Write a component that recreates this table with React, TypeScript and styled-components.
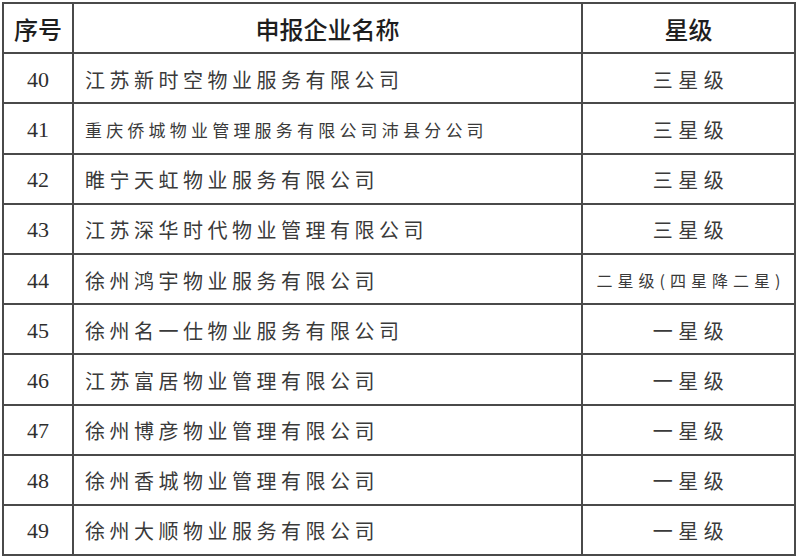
import React from "react";
import styled, {createGlobalStyle} from "styled-components";

const GlobalStyle = createGlobalStyle`
  html, body {
    margin: 0;
    padding: 0;
    background: #ffffff;
  }
`

const Sheet = styled.div`
  display: grid;
  grid-template-columns: 68px 507px 211px;
  grid-auto-rows: 48.2px;
  gap: 2px;
  width: max-content;
  margin: 2px 0 0 2px;
  border: 2px solid #4a4a4a;
  background: #4a4a4a;
`

const Cell = styled.div<{ $align?: "left" | "center" }>`
  display: flex;
  align-items: center;
  justify-content: ${p => p.$align === "left" ? "flex-start" : "center"};
  background: #ffffff;
  overflow: hidden;
  white-space: nowrap;
`

const HeadCell = styled(Cell)`
  font-family: "Noto Sans CJK SC", "Noto Sans", sans-serif;
  font-size: 24px;
  font-weight: 500;
  color: #1e1e1e;
`

const NumCell = styled(Cell)`
  font-family: "Liberation Serif", "Noto Sans CJK SC", serif;
  font-size: 22px;
  color: #2e2e2e;
  padding-top: 3px;
`

const NameCell = styled(Cell)<{ $small?: boolean }>`
  padding-left: 11px;
  padding-top: 2px;
  font-family: "Noto Sans CJK SC", "Noto Sans", sans-serif;
  font-size: ${p => p.$small ? "17px" : "20px"};
  letter-spacing: ${p => p.$small ? "4.2px" : "4.5px"};
  font-weight: 400;
  color: #3a3a3a;
`

const StarCell = styled(Cell)<{ $small?: boolean }>`
  font-family: "Noto Sans CJK SC", "Noto Sans", sans-serif;
  font-size: ${p => p.$small ? "16px" : "20px"};
  letter-spacing: ${p => p.$small ? "5px" : "5.5px"};
  padding-left: 5px;
  padding-top: 2px;
  font-weight: 400;
  color: #3a3a3a;
`

interface Company {
    no: number
    name: string
    level: string
}

const companies: Company[] = [
    {no: 40, name: "江苏新时空物业服务有限公司", level: "三星级"},
    {no: 41, name: "重庆侨城物业管理服务有限公司沛县分公司", level: "三星级"},
    {no: 42, name: "睢宁天虹物业服务有限公司", level: "三星级"},
    {no: 43, name: "江苏深华时代物业管理有限公司", level: "三星级"},
    {no: 44, name: "徐州鸿宇物业服务有限公司", level: "二星级(四星降二星)"},
    {no: 45, name: "徐州名一仕物业服务有限公司", level: "一星级"},
    {no: 46, name: "江苏富居物业管理有限公司", level: "一星级"},
    {no: 47, name: "徐州博彦物业管理有限公司", level: "一星级"},
    {no: 48, name: "徐州香城物业管理有限公司", level: "一星级"},
    {no: 49, name: "徐州大顺物业服务有限公司", level: "一星级"},
]

export default function App() {
    return <>
        <GlobalStyle/>
        <Sheet>
            <HeadCell>序号</HeadCell>
            <HeadCell>申报企业名称</HeadCell>
            <HeadCell>星级</HeadCell>
            {companies.map(c => <React.Fragment key={c.no}>
                <NumCell>{c.no}</NumCell>
                <NameCell $align="left" $small={c.name.length > 16}>{c.name}</NameCell>
                <StarCell $small={c.level.length > 3}>{c.level}</StarCell>
            </React.Fragment>)}
        </Sheet>
    </>
}
